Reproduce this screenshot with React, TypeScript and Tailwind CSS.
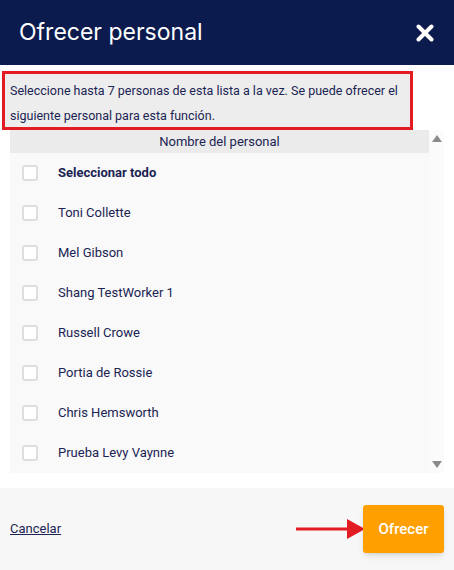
import React from 'react';

const staff = [
  'Toni Collette',
  'Mel Gibson',
  'Shang TestWorker 1',
  'Russell Crowe',
  'Portia de Rossie',
  'Chris Hemsworth',
  'Prueba Levy Vaynne',
];

function Checkbox() {
  return (
    <span className="block h-[16px] w-[16px] rounded-[3px] border-2 border-[#dedede] bg-white" />
  );
}

function Row({ label, bold }: { label: string; bold?: boolean }) {
  return (
    <div className="flex h-[40px] items-center pl-[12px]">
      <Checkbox />
      <span className={`ml-[20px] text-[13px] text-[#1b2453] ${bold ? 'font-bold' : ''}`}>
        {label}
      </span>
    </div>
  );
}

export default function App() {
  return (
    <div className="flex h-[570px] w-[454px] flex-col bg-white font-['Roboto','Noto_Sans',sans-serif]">
      {/* header */}
      <div className="flex h-[65px] items-center justify-between bg-[#0b1b4d] pl-[19px] pr-[20px]">
        <h1 className="font-['Inter',sans-serif] text-[23px] font-normal text-white">Ofrecer personal</h1>
        <svg width={18} height={18} viewBox="0 0 18 18">
          <path d="M2.5 2.5L15.5 15.5M15.5 2.5L2.5 15.5" stroke="white" strokeWidth={4} strokeLinecap="round" />
        </svg>
      </div>

      {/* info */}
      <div className="ml-[2px] mt-[6px] h-[59px] w-[411px] border-[3px] border-[#e31b23] bg-[#ededed] pl-[5px] text-[12.5px] leading-[25px] text-[#1b2453]">
        <p className="pt-[4px]">
          Seleccione hasta 7 personas de esta lista a la vez. Se puede ofrecer el siguiente personal para esta función.
        </p>
      </div>

      {/* list */}
      <div className="ml-[10px] flex h-[343px] w-[434px]">
        <div className="flex w-[419px] flex-col overflow-hidden bg-[#f9f9f9]">
          <div className="flex h-[23px] shrink-0 items-center justify-center bg-[#ebebeb] text-[13px] text-[#1b2453]">
            Nombre del personal
          </div>
          <Row label="Seleccionar todo" bold />
          {staff.map((s) => (
            <Row key={s} label={s} />
          ))}
        </div>
        <div className="flex w-[15px] flex-col items-center justify-between bg-[#fbfbfb] py-[5px]">
          <svg width={10} height={7} viewBox="0 0 10 7">
            <path d="M5 0L10 7H0Z" fill="#8a8a8a" />
          </svg>
          <svg width={10} height={7} viewBox="0 0 10 7">
            <path d="M0 0H10L5 7Z" fill="#8a8a8a" />
          </svg>
        </div>
      </div>

      {/* footer */}
      <div className="mt-[15px] flex flex-1 items-center justify-between bg-[#f7f7f7] pl-[10px] pr-[10px]">
        <a className="text-[13px] text-[#1b2453] underline">Cancelar</a>
        <div className="flex items-center">
          <svg width={69} height={22} viewBox="0 0 69 22" className="-mr-[2px]">
            <path d="M0 11H52" stroke="#e31b23" strokeWidth={3} />
            <path d="M51 1L69 11L51 21Z" fill="#e31b23" />
          </svg>
          <button
            type="button"
            className="h-[48px] w-[81px] rounded-[3px] bg-[#ffa000] text-[15px] font-medium text-white shadow-md"
          >
            Ofrecer
          </button>
        </div>
      </div>
    </div>
  );
}
